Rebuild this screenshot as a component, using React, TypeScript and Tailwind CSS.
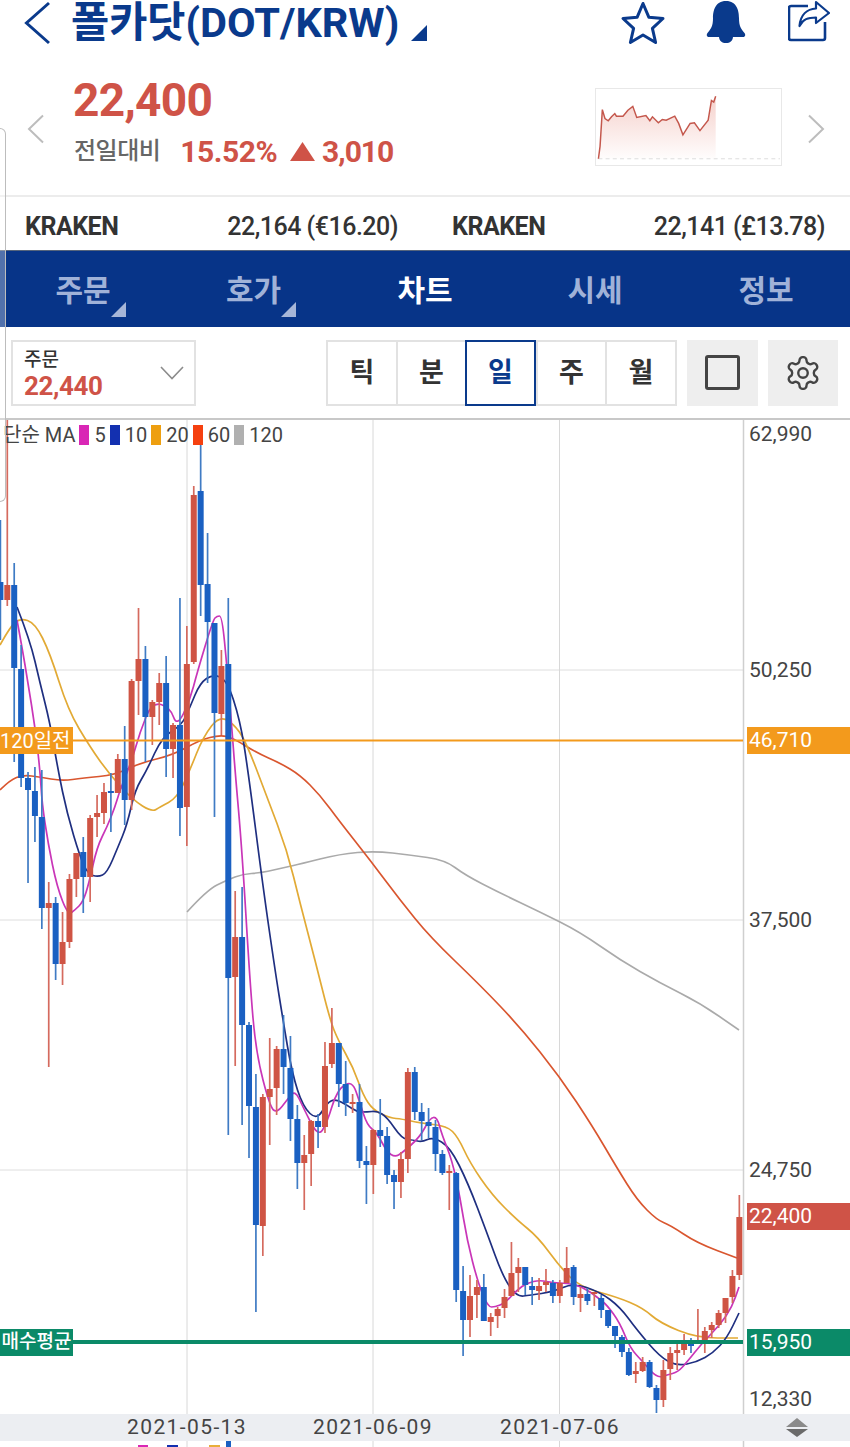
import React from "react";

type Candle = [number, "r" | "b", number, number, number, number];

// index, colour, wick top, wick bottom, body top, body bottom (page y)
const candles: Candle[] = [
  [-1, "b", 520, 640, 582, 600], [0, "r", 420, 606, 585, 600], [1, "b", 563, 762, 585, 668], [2, "b", 645, 787, 669, 778],
  [3, "b", 772, 883, 778, 790], [4, "b", 767, 842, 791, 816], [5, "b", 770, 929, 817, 908], [6, "r", 882, 1067, 903, 908],
  [7, "b", 897, 980, 903, 964], [8, "r", 912, 985, 942, 964], [9, "r", 874, 948, 879, 942], [10, "r", 853, 897, 853, 879],
  [11, "b", 837, 913, 852, 877], [12, "r", 815, 902, 818, 877], [13, "r", 795, 837, 813, 817], [14, "r", 783, 824, 792, 813],
  [15, "b", 773, 832, 791, 793], [16, "r", 754, 793, 759, 793], [17, "b", 726, 825, 759, 800], [18, "r", 679, 810, 681, 800],
  [19, "r", 608, 715, 659, 681], [20, "b", 646, 762, 659, 717], [21, "r", 700, 745, 702, 717], [22, "r", 673, 725, 683, 702],
  [23, "b", 656, 777, 683, 749], [24, "r", 723, 778, 725, 749], [25, "b", 598, 836, 725, 808], [26, "r", 626, 846, 664, 807],
  [27, "r", 486, 664, 495, 662], [28, "b", 445, 616, 491, 585], [29, "b", 533, 683, 584, 622], [30, "b", 623, 817, 623, 713],
  [31, "r", 650, 735, 666, 714], [32, "b", 598, 1135, 664, 978], [33, "r", 891, 1066, 937, 977], [34, "b", 887, 1125, 937, 1025],
  [35, "b", 1022, 1158, 1025, 1106], [36, "b", 1074, 1312, 1107, 1225], [37, "r", 1094, 1256, 1097, 1226], [38, "r", 1038, 1145, 1089, 1097],
  [39, "r", 1046, 1115, 1049, 1088], [40, "b", 1015, 1094, 1049, 1067], [41, "b", 1036, 1141, 1068, 1119], [42, "b", 1105, 1189, 1119, 1163],
  [43, "r", 1135, 1210, 1155, 1163], [44, "r", 1120, 1186, 1121, 1154], [45, "b", 1114, 1148, 1121, 1127], [46, "r", 1042, 1133, 1066, 1127],
  [47, "r", 1008, 1068, 1043, 1064], [48, "b", 1043, 1107, 1043, 1084], [49, "b", 1061, 1116, 1084, 1103], [50, "r", 1094, 1113, 1102, 1104],
  [51, "b", 1084, 1168, 1102, 1161], [52, "b", 1146, 1204, 1161, 1165], [53, "r", 1129, 1194, 1130, 1165], [54, "b", 1099, 1147, 1130, 1136],
  [55, "b", 1127, 1184, 1136, 1175], [56, "b", 1170, 1209, 1175, 1182], [57, "r", 1152, 1198, 1159, 1182], [58, "r", 1068, 1173, 1072, 1159],
  [59, "b", 1067, 1120, 1072, 1112], [60, "b", 1103, 1140, 1112, 1121], [61, "b", 1108, 1138, 1122, 1126], [62, "b", 1120, 1171, 1127, 1154],
  [63, "b", 1150, 1175, 1154, 1173], [64, "r", 1165, 1210, 1171, 1173], [65, "b", 1172, 1302, 1173, 1290], [66, "b", 1266, 1356, 1291, 1320],
  [67, "r", 1275, 1337, 1296, 1320], [68, "r", 1280, 1318, 1287, 1295], [69, "b", 1274, 1321, 1287, 1321], [70, "r", 1313, 1336, 1317, 1322],
  [71, "r", 1307, 1328, 1309, 1316], [72, "r", 1289, 1318, 1297, 1308], [73, "r", 1242, 1296, 1273, 1296], [74, "r", 1258, 1292, 1267, 1273],
  [75, "b", 1267, 1295, 1267, 1285], [76, "b", 1277, 1305, 1286, 1290], [77, "r", 1278, 1300, 1286, 1291], [78, "r", 1269, 1292, 1282, 1285],
  [79, "b", 1280, 1303, 1283, 1296], [80, "r", 1280, 1303, 1283, 1296], [81, "r", 1247, 1283, 1268, 1283], [82, "b", 1265, 1305, 1267, 1297],
  [83, "r", 1287, 1312, 1294, 1298], [84, "b", 1288, 1305, 1294, 1301], [85, "r", 1292, 1306, 1292, 1294], [86, "b", 1295, 1318, 1298, 1310],
  [87, "b", 1310, 1328, 1310, 1326], [88, "b", 1326, 1348, 1326, 1336], [89, "b", 1335, 1357, 1337, 1352], [90, "b", 1348, 1376, 1352, 1375],
  [91, "r", 1362, 1383, 1371, 1374], [92, "r", 1357, 1372, 1362, 1371], [93, "b", 1360, 1388, 1362, 1387], [94, "b", 1385, 1413, 1388, 1400],
  [95, "r", 1360, 1407, 1370, 1400], [96, "r", 1347, 1380, 1353, 1369], [97, "r", 1343, 1370, 1350, 1353], [98, "r", 1334, 1355, 1340, 1350],
  [99, "b", 1338, 1353, 1340, 1346], [100, "r", 1309, 1343, 1340, 1343], [101, "r", 1327, 1353, 1331, 1341], [102, "r", 1322, 1338, 1325, 1330],
  [103, "r", 1310, 1328, 1313, 1325], [104, "r", 1298, 1323, 1298, 1313], [105, "r", 1270, 1303, 1276, 1297], [106, "r", 1195, 1280, 1217, 1275],
];

const ma5 = "17,620 22,647 28,683 35,727 40,770 42,803 48,843 57,887 68,915 75,910 83,902 89,883 97,847 107,827 115,807 120,790 132,760 140,732 152,702 170,707 177,727 190,700 197,673 213,620 217,616 222,616 227,667 232,730 235,770 242,850 250,983 256,1053 270,1107 277,1113 287,1100 295,1090 303,1107 318,1137 327,1123 337,1090 352,1080 360,1103 367,1125 377,1133 387,1152 395,1157 402,1153 420,1137 430,1118 437,1117 442,1135 452,1160 460,1197 467,1240 478,1283 488,1307 495,1307 505,1303 517,1290 527,1283 540,1280 553,1283 567,1283 583,1287 597,1297 607,1305 620,1323 630,1348 643,1362 657,1378 667,1375 678,1372 687,1362 703,1342 720,1325 732,1307 739,1287";
const ma10 = "17,607 30,640 40,683 50,723 58,770 67,813 80,857 88,874 98,877 107,873 118,847 127,825 135,790 147,770 162,737 182,725 190,707 200,683 213,674 227,680 240,720 248,770 263,887 275,970 283,1020 292,1073 303,1107 317,1120 327,1103 335,1099 347,1105 357,1112 367,1112 377,1111 387,1117 402,1139 413,1140 422,1142 433,1137 450,1147 468,1183 487,1233 503,1277 517,1297 530,1295 553,1292 573,1283 600,1292 620,1307 637,1330 660,1357 677,1366 697,1362 713,1353 727,1338 739,1313";
const ma20 = "0,645 10,627 20,618 35,623 50,653 68,710 90,747 110,775 133,800 152,812 160,807 177,798 190,770 203,737 220,715 237,727 248,747 267,797 287,850 300,903 315,960 330,1020 338,1040 353,1067 363,1095 373,1110 390,1118 402,1119 420,1123 447,1126 458,1137 470,1163 492,1195 517,1220 538,1237 560,1267 580,1287 617,1297 643,1308 660,1323 697,1338 738,1338";
const ma60 = "0,790 10,780 23,775 40,777 62,781 83,778 115,775 140,763 173,755 200,740 220,735 233,738 257,753 280,763 300,775 320,795 340,822 370,860 400,900 430,937 480,985 520,1027 560,1077 593,1127 617,1168 637,1200 657,1220 670,1225 697,1243 737,1258";
const ma120 = "187,912 207,890 227,880 243,874 260,873 287,867 300,864 340,854 375,851 410,855 445,860 465,875 500,893 540,912 580,932 620,960 660,983 700,1003 739,1030";

const spark = "515,478 520,440 527,328 535,355 545,362 555,350 565,340 570,348 590,348 605,330 620,318 632,352 660,346 672,362 680,350 698,368 710,358 722,360 748,348 760,370 773,405 795,370 808,368 825,392 850,360 860,300 867,305 873,287";

// rounds the corners of a point list so the averages don't look like polylines
const smooth = (pts: string) => {
  const p = pts.split(" ").map((s) => s.split(",").map(Number));
  let d = `M${p[0][0]} ${p[0][1]}`;
  for (let i = 1; i < p.length - 1; i++) {
    d += ` Q${p[i][0]} ${p[i][1]} ${(p[i][0] + p[i + 1][0]) / 2} ${(p[i][1] + p[i + 1][1]) / 2}`;
  }
  const last = p[p.length - 1];
  return d + ` L${last[0]} ${last[1]}`;
};

const candleX = (i: number) => 7.3 + i * 6.906;

const navItems = [
  { label: "주문", corner: true, nudge: "pr-[4px]" },
  { label: "호가", corner: true, nudge: "pr-[3px]" },
  { label: "차트", active: true, nudge: "" },
  { label: "시세", nudge: "" },
  { label: "정보", nudge: "pl-[2px]" },
];

const periods = ["틱", "분", "일", "주", "월"];

const legend = [
  { swatch: "bg-[#d926b5]", label: "5" },
  { swatch: "bg-[#1330b0]", label: "10" },
  { swatch: "bg-[#ee9f10]", label: "20" },
  { swatch: "bg-[#f5400f]", label: "60" },
  { swatch: "bg-[#b0b0b0]", label: "120" },
];

const App = () => {
  return (
    <div className="relative w-[850px] h-[1447px] overflow-hidden bg-white font-['Roboto','Noto_Sans_CJK_KR',sans-serif] text-[#333]">
      {/* header */}
      <div className="flex items-start h-[50px] pl-[24px]">
        <svg width="28" height="44" viewBox="0 0 28 44" className="mt-[1px] shrink-0">
          <polyline points="25,2 2.5,22 25,42" fill="none" stroke="#0a3a8c" strokeWidth="3" />
        </svg>
        <span className="ml-[19px] text-[41.5px] leading-[46px] font-bold text-[#0a3a8c] whitespace-nowrap">폴카닷(DOT/KRW)</span>
        <svg width="16" height="16" viewBox="0 0 16 16" className="ml-[12px] mt-[25px] shrink-0">
          <polygon points="0,16 16,0 16,16" fill="#0a3a8c" />
        </svg>
        <div className="ml-auto flex items-start pr-[20px] gap-[40px]">
          <svg width="46" height="44" viewBox="0 0 46 44" className="mt-[1px]">
            <polygon points="23,2.5 28.8,16.2 43,17.5 32.4,27.4 35.6,41.5 23,34 10.4,41.5 13.6,27.4 3,17.5 17.2,16.2" fill="none" stroke="#0a3a8c" strokeWidth="3" strokeLinejoin="round" />
          </svg>
          <svg width="40" height="44" viewBox="0 0 40 44">
            <path d="M20 1 C9 1 7 11 7 18 C7 26 5 29 1.5 33 C0 35 1 37 3 37 H13 C13.5 41 16 43 20 43 C24 43 26.5 41 27 37 H37 C39 37 40 35 38.5 33 C35 29 33 26 33 18 C33 11 31 1 20 1 Z" fill="#0a3a8c" />
          </svg>
          <svg width="42" height="44" viewBox="0 0 42 44" className="ml-[2px]">
            <path d="M20 6 H3 Q1 6 1 8 V38 Q1 40 3 40 H35 Q37 40 37 38 V22" fill="none" stroke="#0a3a8c" strokeWidth="2.6" />
            <path d="M28 2 L41 13 L28 23 V17.5 C20 17.5 15 19 11.5 26 C12.5 15 19 9 28 8.5 Z" fill="#fff" stroke="#0a3a8c" strokeWidth="2.2" strokeLinejoin="round" />
          </svg>
        </div>
      </div>

      {/* price summary */}
      <div className="flex items-start h-[147px] border-b-2 border-[#ececec]">
        <svg width="18" height="30" viewBox="0 0 18 30" className="ml-[27px] mt-[64px] shrink-0">
          <polyline points="16,1.5 2,15 16,28.5" fill="none" stroke="#bdbdbd" strokeWidth="2" />
        </svg>
        <div className="ml-[28px] flex flex-col">
          <span className="text-[46px] leading-[48px] mt-[26px] font-bold text-[#cf5347] tracking-[-0.7px]">22,400</span>
          <div className="flex items-center mt-[7px] h-[40px]">
            <span className="ml-[1px] text-[24px] font-medium text-[#666] tracking-[-0.5px] whitespace-nowrap">전일대비</span>
            <span className="ml-[20px] text-[30px] font-bold text-[#cf5347] tracking-[-0.5px]">15.52%</span>
            <svg width="25" height="19" viewBox="0 0 25 19" className="ml-[13px] shrink-0">
              <polygon points="12.5,0 25,19 0,19" fill="#cf5347" />
            </svg>
            <span className="ml-[7px] text-[30px] font-bold text-[#cf5347] tracking-[-1px]">3,010</span>
          </div>
        </div>
        <div className="ml-auto mt-[38px] w-[187px] h-[78px] border border-[#e8e8e8] shrink-0">
          <svg width="185" height="76" viewBox="511 265 558 232">
            <defs>
              <linearGradient id="sparkFill" x1="0" y1="0" x2="0" y2="1">
                <stop offset="0" stopColor="#f0b8b0" stopOpacity="0.65" />
                <stop offset="1" stopColor="#f0b8b0" stopOpacity="0.03" />
              </linearGradient>
            </defs>
            <polygon points={`515,478 ${spark} 873,478`} fill="url(#sparkFill)" />
            <line x1="515" y1="478" x2="1069" y2="478" stroke="#dcdcdc" strokeWidth="3" strokeDasharray="12 10" />
            <polyline points={spark} fill="none" stroke="#c4574c" strokeWidth="4.5" />
          </svg>
        </div>
        <svg width="18" height="30" viewBox="0 0 18 30" className="ml-[25px] mr-[25px] mt-[64px] shrink-0">
          <polyline points="2,1.5 16,15 2,28.5" fill="none" stroke="#bdbdbd" strokeWidth="2" />
        </svg>
      </div>

      {/* exchange quotes */}
      <div className="grid grid-cols-2 gap-x-[54px] h-[53px] items-center pt-[7px] px-[25px] text-[25px] font-bold text-[#333] tracking-[-0.5px]">
        <div className="flex justify-between">
          <span>KRAKEN</span>
          <span className="font-medium">22,164 (€16.20)</span>
        </div>
        <div className="flex justify-between">
          <span>KRAKEN</span>
          <span className="font-medium">22,141 (£13.78)</span>
        </div>
      </div>

      {/* tabs */}
      <div className="grid grid-cols-5 h-[77px] bg-[#073488] border-t border-[#56657c]">
        {navItems.map((item) => (
          <div key={item.label} className={`relative flex items-center justify-center ${item.nudge}`}>
            <span className={`text-[30px] leading-none pt-[3px] font-bold ${item.active ? "text-white" : "text-[#a0b2d8]"}`}>{item.label}</span>
            {item.corner && (
              <svg width="15" height="15" viewBox="0 0 15 15" className="absolute left-[111px] top-[51px]">
                <polygon points="0,15 15,0 15,15" fill="#a6b6d8" />
              </svg>
            )}
          </div>
        ))}
      </div>

      {/* toolbar */}
      <div className="flex items-center h-[93px] pl-[11px] border-b-2 border-[#c8c8c8]">
        <div className="relative flex flex-col justify-center shrink-0 w-[185px] h-[66px] pt-[3px] pl-[11px] border-2 border-[#e2e2e2]">
          <span className="text-[19px] leading-[24px] font-medium text-[#333]">주문</span>
          <span className="text-[26px] leading-[28px] font-bold text-[#cf5347] tracking-[-0.4px]">22,440</span>
          <svg width="24" height="14" viewBox="0 0 24 14" className="absolute right-[10px] top-[24px]">
            <polyline points="1,1 12,12.5 23,1" fill="none" stroke="#8c8c8c" strokeWidth="1.6" />
          </svg>
        </div>
        <div className="ml-[130px] flex shrink-0 h-[66px] border-2 border-[#e2e2e2]">
          {periods.map((p) => (
            <div
              key={p}
              className={
                p === "일"
                  ? "flex items-center justify-center w-[71px] -my-[2px] pt-[2px] border-2 border-[#0a3a8c] text-[27px] font-bold text-[#0a3a8c]"
                  : "flex items-center justify-center w-[69px] first:w-[68px] last:w-[70px] pt-[2px] border-l-2 first:border-l-0 border-[#e2e2e2] text-[27px] font-bold text-[#333]"
              }
            >
              {p}
            </div>
          ))}
        </div>
        <div className="ml-[10px] flex items-center justify-center shrink-0 w-[71px] h-[66px] bg-[#eeeeee]">
          <div className="w-[35px] h-[35px] rounded-[3px] border-[3px] border-[#444]" />
        </div>
        <div className="ml-[10px] flex items-center justify-center shrink-0 w-[70px] h-[66px] bg-[#eeeeee]">
          <svg width="38" height="38" viewBox="0 0 24 24" fill="none" stroke="#444" strokeWidth="1.5" strokeLinecap="round" strokeLinejoin="round">
            <path d="M12.22 2h-.44a2 2 0 0 0-2 2v.18a2 2 0 0 1-1 1.73l-.43.25a2 2 0 0 1-2 0l-.15-.08a2 2 0 0 0-2.73.73l-.22.38a2 2 0 0 0 .73 2.73l.15.1a2 2 0 0 1 1 1.72v.51a2 2 0 0 1-1 1.74l-.15.09a2 2 0 0 0-.73 2.73l.22.38a2 2 0 0 0 2.73.73l.15-.08a2 2 0 0 1 2 0l.43.25a2 2 0 0 1 1 1.73V20a2 2 0 0 0 2 2h.44a2 2 0 0 0 2-2v-.18a2 2 0 0 1 1-1.73l.43-.25a2 2 0 0 1 2 0l.15.08a2 2 0 0 0 2.73-.73l.22-.39a2 2 0 0 0-.73-2.73l-.15-.08a2 2 0 0 1-1-1.74v-.5a2 2 0 0 1 1-1.74l.15-.09a2 2 0 0 0 .73-2.73l-.22-.38a2 2 0 0 0-2.73-.73l-.15.08a2 2 0 0 1-2 0l-.43-.25a2 2 0 0 1-1-1.73V4a2 2 0 0 0-2-2z" />
            <circle cx="12" cy="12" r="3" />
          </svg>
        </div>
      </div>

      {/* chart */}
      <div className="relative h-[1027px]">
        <svg width="850" height="1027" viewBox="0 420 850 1027" className="absolute inset-0">
          {[670, 920, 1170].map((y) => (
            <line key={y} x1="0" y1={y} x2="743" y2={y} stroke="#dedede" strokeWidth="1" />
          ))}
          {[187, 373, 559.5].map((x) => (
            <line key={x} x1={x} y1="420" x2={x} y2="1447" stroke="#d8d8d8" strokeWidth="1" />
          ))}
          <line x1="743.5" y1="420" x2="743.5" y2="1447" stroke="#cfcfcf" strokeWidth="1.5" />
          <path d={smooth(ma120)} fill="none" stroke="#aaaaaa" strokeWidth="1.6" />
          <path d={smooth(ma60)} fill="none" stroke="#d9562f" strokeWidth="1.7" />
          <path d={smooth(ma20)} fill="none" stroke="#e2aa35" strokeWidth="1.7" />
          <path d={smooth(ma10)} fill="none" stroke="#1f2f80" strokeWidth="1.7" />
          <path d={smooth(ma5)} fill="none" stroke="#c936b8" strokeWidth="1.7" />
          {candles.map(([i, c, wt, wb, bt, bb]) => (
            <g key={i}>
              <line x1={candleX(i)} y1={wt} x2={candleX(i)} y2={wb} stroke={c === "r" ? "#d56a5e" : "#3f7bc4"} strokeWidth="1.7" />
              <rect x={candleX(i) - 3} y={bt} width="6" height={bb - bt} fill={c === "r" ? "#cf5444" : "#1a60c2"} />
            </g>
          ))}
          <line x1="0" y1="740.5" x2="743" y2="740.5" stroke="#f39a1c" strokeWidth="2" />
          <line x1="0" y1="1342" x2="743" y2="1342" stroke="#0b8a68" strokeWidth="4" />
          {/* the next row of the legend is cut off by the bottom of the window */}
          <rect x="138" y="1445" width="10" height="2" fill="#d926b5" />
          <rect x="167" y="1445" width="11" height="2" fill="#1330b0" />
          <rect x="209" y="1445" width="11" height="2" fill="#e8ae3a" />
          <rect x="226" y="1441" width="5" height="6" fill="#1a60c2" />
        </svg>

        {/* moving average legend */}
        <div className="absolute left-[3px] top-[5px] flex items-center text-[20px] leading-[20px] text-[#444] whitespace-nowrap">
          <span>단순 MA</span>
          {legend.map((l) => (
            <React.Fragment key={l.label}>
              <span className={`ml-[4px] w-[10px] h-[20px] ${l.swatch}`} />
              <span className="ml-[5px]">{l.label}</span>
            </React.Fragment>
          ))}
        </div>

        {/* price axis */}
        {[
          { y: "top-[1px]", v: "62,990" },
          { y: "top-[237px]", v: "50,250" },
          { y: "top-[487px]", v: "37,500" },
          { y: "top-[737px]", v: "24,750" },
          { y: "top-[966px]", v: "12,330" },
        ].map((a) => (
          <span key={a.v} className={`absolute left-[749px] ${a.y} text-[21px] leading-[26px] text-[#444]`}>{a.v}</span>
        ))}

        {/* price tags */}
        <span className="absolute left-0 top-[307px] flex items-center w-[73px] h-[27px] bg-[#f39a1c] text-white text-[20px] whitespace-nowrap">120일전</span>
        <span className="absolute left-0 top-[909px] flex items-center justify-center w-[73px] h-[27px] bg-[#0b8a68] text-white text-[19px] font-medium whitespace-nowrap">매수평균</span>
        <span className="absolute left-[747px] top-[307px] flex items-center w-[103px] h-[27px] pl-[2px] bg-[#f39a1c] text-white text-[21px]">46,710</span>
        <span className="absolute left-[747px] top-[783px] flex items-center w-[103px] h-[27px] pl-[2px] bg-[#cf5347] text-white text-[21px]">22,400</span>
        <span className="absolute left-[747px] top-[909px] flex items-center w-[103px] h-[27px] pl-[2px] bg-[#0b8a68] text-white text-[21px]">15,950</span>

        {/* date axis */}
        <div className="absolute left-0 top-[994px] w-full h-[27px] bg-[#eceef2]">
          {[
            { x: "left-[87px]", v: "2021-05-13" },
            { x: "left-[273px]", v: "2021-06-09" },
            { x: "left-[460px]", v: "2021-07-06" },
          ].map((d) => (
            <span key={d.v} className={`absolute ${d.x} top-0 w-[200px] text-center text-[21px] tracking-[1.4px] leading-[27px] text-[#444]`}>{d.v}</span>
          ))}
          <svg width="22" height="20" viewBox="0 0 22 20" className="absolute left-[786px] top-[4px]">
            <polygon points="11,0 22,9 0,9" fill="#8a8a8a" />
            <polygon points="0,11 22,11 11,19" fill="#6a6a6a" />
          </svg>
        </div>
      </div>

      {/* edge of the floating side panel */}
      <div className="absolute left-0 top-[128px] w-[6px] h-[374px] rounded-r-[6px] border-y border-r border-[#bdbdbd] bg-white/30" />
    </div>
  );
};

export default App;
